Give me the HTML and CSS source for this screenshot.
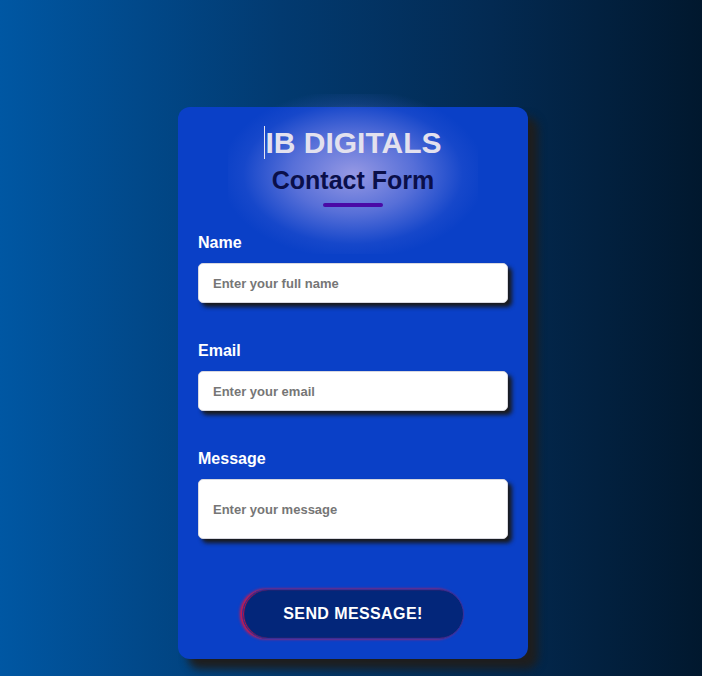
FILE: index.html
```html
<!DOCTYPE html>
<html lang="en">
<head>
<meta charset="utf-8">
<title>IB Digitals - Contact Form</title>
<link rel="stylesheet" href="styles.css">
</head>
<body>
  <main class="card">
    <header class="card-head">
      <h1 class="brand"><span class="caret">IB DIGITALS</span></h1>
      <h2 class="subtitle">Contact Form</h2>
      <div class="rule"></div>
    </header>
    <form class="form">
      <div class="field">
        <label class="label" for="name">Name</label>
        <input class="input" id="name" type="text" placeholder="Enter your full name">
      </div>
      <div class="field">
        <label class="label" for="email">Email</label>
        <input class="input" id="email" type="email" placeholder="Enter your email">
      </div>
      <div class="field">
        <label class="label" for="msg">Message</label>
        <textarea class="input textarea" id="msg" placeholder="Enter your message"></textarea>
      </div>
      <div class="actions">
        <button class="send" type="button">SEND MESSAGE!</button>
      </div>
    </form>
  </main>
</body>
</html>
```
FILE: styles.css
```css
* { box-sizing: border-box; }
html, body { height: 100%; }
body {
  margin: 0;
  font-family: "Liberation Sans", Arial, sans-serif;
  background: linear-gradient(to right, #0057a3 0%, #023a70 40%, #032a52 70%, #01182e 100%);
  display: flex;
  justify-content: center;
  align-items: flex-start;
  padding: 107px 0 0 4px;
  overflow: hidden;
}
.card {
  width: 350px;
  height: 552px;
  background: #0a40c7;
  border-radius: 12px;
  box-shadow: 10px 10px 8px #1e1e1e;
  padding: 17px 20px 20px;
  display: flex;
  flex-direction: column;
}
.card-head {
  position: relative;
  display: flex;
  flex-direction: column;
  align-items: center;
}
.card-head::before {
  content: "";
  position: absolute;
  left: 50%;
  top: 50px;
  width: 250px;
  height: 160px;
  transform: translate(-50%, -50%);
  background: radial-gradient(ellipse at center, rgba(185, 175, 235, 0.8) 0%, rgba(150, 150, 230, 0.55) 35%, rgba(70, 100, 215, 0.2) 62%, rgba(10, 64, 199, 0) 75%);
  pointer-events: none;
}
.brand {
  position: relative;
  margin: 0;
  font-size: 30px;
  font-weight: bold;
  line-height: 38px;
  color: #e3e1ee;
}
.caret {
  border-left: 1px solid #e6e6f2;
  padding-left: 0;
}
.subtitle {
  position: relative;
  margin: 0;
  font-size: 25px;
  font-weight: bold;
  line-height: 36px;
  color: #0a0f4a;
}
.rule {
  position: relative;
  width: 60px;
  height: 4px;
  border-radius: 2px;
  background: #4a0aa6;
  margin-top: 5px;
}
.form {
  display: flex;
  flex-direction: column;
  margin-top: 27px;
}
.field {
  display: flex;
  flex-direction: column;
  margin-bottom: 39px;
}
.label {
  color: #ffffff;
  font-size: 16px;
  font-weight: bold;
  line-height: 18px;
  margin-bottom: 11px;
}
.input {
  width: 310px;
  height: 40px;
  border: 1px solid #d8d8e0;
  border-radius: 5px;
  background: #ffffff;
  box-shadow: 4px 4px 4px #1a1a1a;
  padding: 0 14px;
  font-family: "Liberation Sans", Arial, sans-serif;
  font-size: 13px;
  font-weight: bold;
  color: #333;
  outline: none;
}
.input::placeholder { color: #767676; }
.textarea {
  height: 60px;
  padding: 22px 14px 0;
  resize: none;
  line-height: 16px;
}
.actions {
  display: flex;
  justify-content: center;
  margin-top: 11px;
}
.send {
  width: 222px;
  height: 50px;
  border-radius: 25px;
  border: 1px solid #3a2f98;
  background: #03267a;
  box-shadow: -2px 0 3px #e8123a, inset 1px 0 1px #d01040;
  color: #ffffff;
  font-family: "Liberation Sans", Arial, sans-serif;
  font-size: 16px;
  font-weight: bold;
  letter-spacing: 0.4px;
}
```
